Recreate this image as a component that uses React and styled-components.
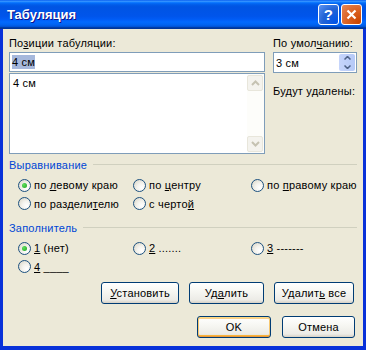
import styled, { createGlobalStyle, css } from 'styled-components';

const Global = createGlobalStyle`
  html, body { margin: 0; padding: 0; background: #ece9d8; }
  body { font-family: "Liberation Sans", Arial, sans-serif; font-size: 11px; letter-spacing: 0.2px; color: #000; }
`;

const Win = styled.div`
  width: 366px;
  height: 350px;
  box-sizing: border-box;
  display: flex;
  flex-direction: column;
  background: #0831d9;
  overflow: hidden;
`;

const TitleBar = styled.div`
  height: 29px;
  flex: 0 0 auto;
  display: flex;
  align-items: center;
  padding: 0 4px 0 7px;
  background: linear-gradient(to bottom, #0058ee 0%, #3a93ff 4%, #288eff 6%, #127dff 8%, #036ffc 10%, #0262ee 14%, #0057e5 20%, #0054e3 24%, #0055eb 56%, #005bf5 66%, #026afe 76%, #0062ef 86%, #0052d6 92%, #0040ab 94%, #003092 100%);
`;

const Title = styled.div`
  flex: 1;
  color: #fff;
  font-family: "Liberation Sans", Arial, sans-serif;
  font-weight: bold;
  font-size: 13px;
  letter-spacing: 0;
  text-shadow: 1px 1px #0f1089;
`;

const CapBtn = styled.div`
  width: 21px;
  height: 21px;
  box-sizing: border-box;
  margin-left: 2px;
  border: 1px solid #fff;
  border-radius: 3px;
  display: flex;
  align-items: center;
  justify-content: center;
  color: #fff;
  font-weight: bold;
  font-size: 15px;
  ${(p) =>
    p.$close
      ? css`background: radial-gradient(circle at 90% 90%, #cc4600 0%, #dc6527 55%, #e5895a 100%);`
      : css`background: radial-gradient(circle at 90% 90%, #0054e9 0%, #2263d5 55%, #5e95f4 100%);`}
`;

const Body = styled.div`
  flex: 1;
  margin: 0 3px 4px 3px;
  background: #ece9d8;
  padding: 8px 6px 0 6px;
  display: flex;
  flex-direction: column;
`;

const Top = styled.div`
  display: grid;
  grid-template-columns: 256px 84px;
  column-gap: 8px;
`;

const Col = styled.div`
  display: flex;
  flex-direction: column;
`;

const Label = styled.div`
  line-height: 13px;
  height: 13px;
  margin-bottom: ${(p) => p.$mb ?? 2}px;
  margin-top: ${(p) => p.$mt ?? 0}px;
  white-space: nowrap;
`;

const TextBox = styled.div`
  height: 20px;
  box-sizing: border-box;
  border: 1px solid #7f9db9;
  background: #fff;
  display: flex;
  align-items: center;
  padding-left: 2px;
`;

const Sel = styled.span`
  background: #a6b8dc;
  padding: 1px 0;
`;

const ListBox = styled.div`
  margin-top: 1px;
  height: 81px;
  box-sizing: border-box;
  border: 1px solid #7f9db9;
  background: #fff;
  display: flex;
`;

const ListItems = styled.div`
  flex: 1;
  padding: 3px 3px;
  line-height: 13px;
`;

const ScrollBar = styled.div`
  width: 17px;
  background: #fdfdfa;
  display: flex;
  flex-direction: column;
  justify-content: space-between;
  padding: 1px 0;
`;

const ScrollBtn = styled.div`
  width: 16px;
  height: 16px;
  box-sizing: border-box;
  border: 1px solid #e8e6db;
  border-radius: 2px;
  background: #f4f3ee;
  display: flex;
  align-items: center;
  justify-content: center;
`;

const Spin = styled.div`
  height: 21px;
  box-sizing: border-box;
  border: 1px solid #7f9db9;
  background: #fff;
  display: flex;
  align-items: stretch;
`;

const SpinText = styled.div`
  flex: 1;
  display: flex;
  align-items: center;
  padding-left: 2px;
`;

const SpinBtns = styled.div`
  width: 16px;
  margin: 1px;
  border-radius: 2px;
  background: linear-gradient(to right, #c6d5fb, #b5c9f7);
  display: flex;
  flex-direction: column;
  align-items: center;
  justify-content: space-around;
`;

const GroupHead = styled.div`
  display: flex;
  align-items: center;
  margin-top: ${(p) => p.$mt}px;
  height: 13px;
  color: #0046d5;
  gap: 6px;
  &::after {
    content: '';
    flex: 1;
    height: 1px;
    background: #d0d0bf;
  }
`;

const RadioGrid = styled.div`
  display: grid;
  grid-template-columns: 115px 118px 1fr;
  grid-auto-rows: 18px;
  margin: 5px 0 0 9px;
  & > div:nth-child(n + 4) { height: 19px; }
`;

const Opt = styled.div`
  display: flex;
  align-items: center;
  gap: 3px;
  white-space: nowrap;
`;

const Circle = styled.span`
  width: 13px;
  height: 13px;
  flex: 0 0 auto;
  box-sizing: border-box;
  border-radius: 50%;
  border: 1px solid #1c5180;
  background: radial-gradient(circle at 70% 70%, #fff 0%, #f4f3ee 40%, #d6d2c2 100%);
  display: flex;
  align-items: center;
  justify-content: center;
  &::after {
    content: '';
    display: ${(p) => (p.$on ? 'block' : 'none')};
    width: 5px;
    height: 5px;
    border-radius: 50%;
    background: radial-gradient(circle at 35% 35%, #5ee05e, #21a121);
  }
`;

const U = styled.span`
  text-decoration: underline;
`;

const BtnRow = styled.div`
  display: flex;
  justify-content: flex-end;
  gap: ${(p) => p.$gap}px;
  margin-top: ${(p) => p.$mt}px;
  margin-right: ${(p) => p.$mr}px;
`;

const Btn = styled.div`
  width: ${(p) => p.$w}px;
  height: 22px;
  box-sizing: border-box;
  border: 1px solid #003c74;
  border-radius: 3px;
  background: linear-gradient(to bottom, #ffffff 0%, #f7f7f3 40%, #ecebe6 85%, #d6d0c5 100%);
  display: flex;
  align-items: center;
  justify-content: center;
  ${(p) =>
    p.$def &&
    css`box-shadow: inset 0 -1px #e5973c, inset 0 1px #fbd986, inset 1px 0 #f7c871, inset -1px 0 #f7c871, inset 0 -2px #f8b33b, inset 0 2px #fcd088;`}
`;

const Up = ({ c = '#c5c2b2' }) => (
  <svg width="9" height="6" viewBox="0 0 9 6"><path d="M1 5 L4.5 1.5 L8 5" fill="none" stroke={c} strokeWidth="2" /></svg>
);
const Down = ({ c = '#c5c2b2' }) => (
  <svg width="9" height="6" viewBox="0 0 9 6"><path d="M1 1 L4.5 4.5 L8 1" fill="none" stroke={c} strokeWidth="2" /></svg>
);

const Radio = ({ on, children }) => (
  <Opt>
    <Circle $on={on} />
    <span>{children}</span>
  </Opt>
);

export default function App() {
  return (
    <Win>
      <Global />
      <TitleBar>
        <Title>Табуляция</Title>
        <CapBtn>?</CapBtn>
        <CapBtn $close>
          <svg width="11" height="11" viewBox="0 0 11 11"><path d="M1.5 1.5 L9.5 9.5 M9.5 1.5 L1.5 9.5" stroke="#fff" strokeWidth="2.2" /></svg>
        </CapBtn>
      </TitleBar>
      <Body>
        <Top>
          <Col>
            <Label>По<U>з</U>иции табуляции:</Label>
            <TextBox><Sel>4 см</Sel></TextBox>
            <ListBox>
              <ListItems>4 см</ListItems>
              <ScrollBar>
                <ScrollBtn><Up /></ScrollBtn>
                <ScrollBtn><Down /></ScrollBtn>
              </ScrollBar>
            </ListBox>
          </Col>
          <Col>
            <Label>По умол<U>ч</U>анию:</Label>
            <Spin>
              <SpinText>3 см</SpinText>
              <SpinBtns>
                <svg width="7" height="4" viewBox="0 0 7 4"><path d="M0.5 3.5 L3.5 0.5 L6.5 3.5" fill="none" stroke="#4d6185" strokeWidth="1.5" /></svg>
                <svg width="7" height="4" viewBox="0 0 7 4"><path d="M0.5 0.5 L3.5 3.5 L6.5 0.5" fill="none" stroke="#4d6185" strokeWidth="1.5" /></svg>
              </SpinBtns>
            </Spin>
            <Label $mt={12}>Будут удалены:</Label>
          </Col>
        </Top>

        <GroupHead $mt={4}>Выравнивание</GroupHead>
        <RadioGrid>
          <Radio on>по <U>л</U>евому краю</Radio>
          <Radio>по <U>ц</U>ентру</Radio>
          <Radio>по <U>п</U>равому краю</Radio>
          <Radio>по раздели<U>т</U>елю</Radio>
          <Radio>с черто<U>й</U></Radio>
        </RadioGrid>

        <GroupHead $mt={9}>Заполнитель</GroupHead>
        <RadioGrid>
          <Radio on><U>1</U> (нет)</Radio>
          <Radio><U>2</U> .......</Radio>
          <Radio><U>3</U> -------</Radio>
          <Radio><U>4</U> ____</Radio>
        </RadioGrid>

        <BtnRow $gap={10} $mt={7} $mr={3}>
          <Btn $w={78}><span><U>У</U>становить</span></Btn>
          <Btn $w={75}><span>Уд<U>а</U>лить</span></Btn>
          <Btn $w={80}><span>Удалит<U>ь</U> все</span></Btn>
        </BtnRow>
        <BtnRow $gap={11} $mt={12} $mr={2}>
          <Btn $w={74} $def>OK</Btn>
          <Btn $w={73}>Отмена</Btn>
        </BtnRow>
      </Body>
    </Win>
  );
}
